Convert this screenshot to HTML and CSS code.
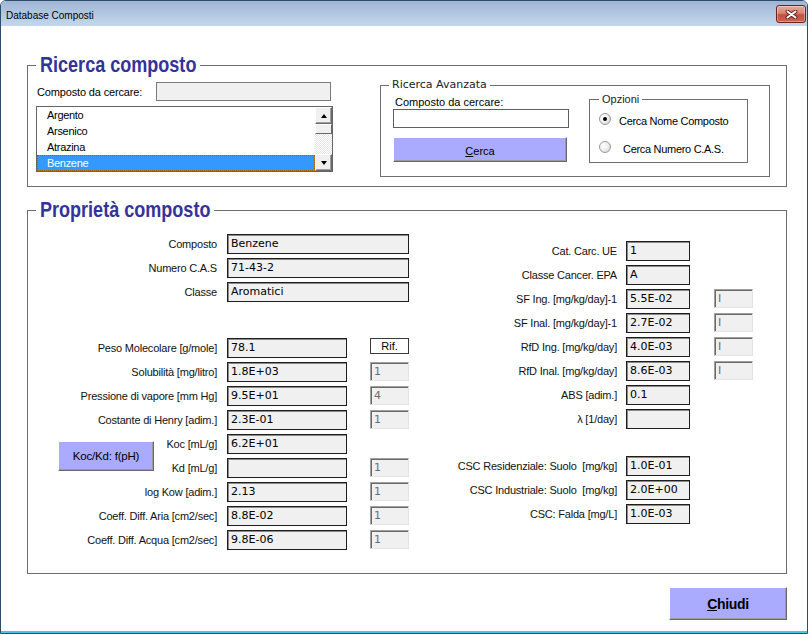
FILE: index.html
```html
<!DOCTYPE html>
<html lang="it">
<head>
<meta charset="utf-8">
<title>Database Composti</title>
<link rel="stylesheet" href="styles.css">
</head>
<body>
<div class="window">
  <div class="titlebar">
    <span class="title">Database Composti</span>
    <div class="close">
      <svg width="13" height="9" viewBox="0 0 13 9"><path d="M2.5 1.5 L10.5 7.5 M10.5 1.5 L2.5 7.5" stroke="#5a1a10" stroke-width="3.8" stroke-linecap="round" fill="none"/><path d="M2.5 1.5 L10.5 7.5 M10.5 1.5 L2.5 7.5" stroke="#fff" stroke-width="2.1" stroke-linecap="round" fill="none"/></svg>
    </div>
  </div>
  <div class="client">
    <fieldset class="group search">
      <legend class="lg-search"><span class="cond">Ricerca composto</span></legend>
      <div class="search-body">
        <div class="search-left">
          <div class="find-row">
            <span class="find-label">Composto da cercare:</span>
            <div class="find-input"></div>
          </div>
          <div class="listbox">
            <ul class="items">
              <li>Argento</li>
              <li>Arsenico</li>
              <li>Atrazina</li>
              <li class="sel">Benzene</li>
            </ul>
            <div class="scrollbar">
              <div class="sb-btn"><span class="tri-up"></span></div>
              <div class="sb-thumb"></div>
              <div class="sb-track"></div>
              <div class="sb-btn"><span class="tri-down"></span></div>
            </div>
          </div>
        </div>
        <fieldset class="advanced">
          <legend>Ricerca Avanzata</legend>
          <div class="adv-body">
            <div class="adv-left">
              <div class="adv-label">Composto da cercare:</div>
              <div class="adv-input"></div>
              <div class="btn cerca"><span><u>C</u>erca</span></div>
            </div>
            <fieldset class="options">
              <legend>Opzioni</legend>
              <div class="radio-row first"><span class="radio checked"></span><span class="rlabel">Cerca Nome Composto</span></div>
              <div class="radio-row second"><span class="radio"></span><span class="rlabel wide">Cerca Numero C.A.S.</span></div>
            </fieldset>
          </div>
        </fieldset>
      </div>
    </fieldset>

    <fieldset class="group props">
      <legend class="lg-props"><span class="cond">Proprietà composto</span></legend>
      <div class="props-body">
        <div class="left-grid">
          <div class="lbl">Composto</div><div class="val span">Benzene</div>
          <div class="lbl">Numero C.A.S</div><div class="val span">71-43-2</div>
          <div class="lbl">Classe</div><div class="val span">Aromatici</div>
          <div class="spacer"></div>
          <div class="lbl">Peso Molecolare [g/mole]</div><div class="val">78.1</div><div class="rif">Rif.</div>
          <div class="lbl">Solubilità [mg/litro]</div><div class="val">1.8E+03</div><div class="ref">1</div>
          <div class="lbl">Pressione di vapore [mm Hg]</div><div class="val">9.5E+01</div><div class="ref">4</div>
          <div class="lbl">Costante di Henry [adim.]</div><div class="val">2.3E-01</div><div class="ref">1</div>
          <div class="koc">
            <div class="btn koc-btn"><span>Koc/Kd: f(pH)</span></div>
            <div class="koc-labels"><div>Koc [mL/g]</div><div>Kd [mL/g]</div></div>
          </div>
          <div class="val">6.2E+01</div>
          <div class="val"></div><div class="ref">1</div>
          <div class="lbl">log Kow [adim.]</div><div class="val">2.13</div><div class="ref">1</div>
          <div class="lbl">Coeff. Diff. Aria [cm2/sec]</div><div class="val">8.8E-02</div><div class="ref">1</div>
          <div class="lbl">Coeff. Diff. Acqua [cm2/sec]</div><div class="val">9.8E-06</div><div class="ref">1</div>
        </div>
        <div class="right-grid">
          <div class="lbl">Cat. Carc. UE</div><div class="val">1</div>
          <div class="lbl">Classe Cancer. EPA</div><div class="val">A</div>
          <div class="lbl">SF Ing. [mg/kg/day]-1</div><div class="val">5.5E-02</div><div class="ref">I</div>
          <div class="lbl">SF Inal. [mg/kg/day]-1</div><div class="val">2.7E-02</div><div class="ref">I</div>
          <div class="lbl">RfD Ing. [mg/kg/day]</div><div class="val">4.0E-03</div><div class="ref">I</div>
          <div class="lbl">RfD Inal. [mg/kg/day]</div><div class="val">8.6E-03</div><div class="ref">I</div>
          <div class="lbl">ABS [adim.]</div><div class="val">0.1</div>
          <div class="lbl">λ [1/day]</div><div class="val"></div>
          <div class="spacer"></div>
          <div class="lbl">CSC Residenziale: Suolo&nbsp; [mg/kg]</div><div class="val">1.0E-01</div>
          <div class="lbl">CSC Industriale: Suolo&nbsp; [mg/kg]</div><div class="val">2.0E+00</div>
          <div class="lbl">CSC: Falda [mg/L]</div><div class="val">1.0E-03</div>
        </div>
      </div>
    </fieldset>

    <div class="footer">
      <div class="btn chiudi"><span><u>C</u>hiudi</span></div>
    </div>
  </div>
</div>
</body>
</html>
```

FILE: styles.css
```css
* { box-sizing: border-box; margin: 0; padding: 0; }
html, body { width: 811px; height: 634px; background: #fff; overflow: hidden; }
body { font-family: "Liberation Sans", Arial, sans-serif; font-size: 11px; color: #000; }

.window {
  width: 808px; height: 634px;
  border: 1px solid #2f4b6a;
  border-radius: 6px 6px 0 0;
  display: flex; flex-direction: column;
  background: #fff;
}
.titlebar {
  height: 25px; flex: none;
  background: linear-gradient(#9fb6d4, #c4d7ed);
  border-radius: 5px 5px 0 0;
  display: flex; align-items: center; justify-content: space-between;
  padding: 0 1px 0 5px;
}
.title { font-size: 10px; margin-top: 4px; color: #000; }
.close {
  width: 30px; height: 18px; margin-top: 1px;
  border: 1px solid #6a2219; border-radius: 3px;
  background: linear-gradient(#e6aa9c 0%, #d98472 45%, #c4503f 55%, #cb6350 100%);
  box-shadow: inset 0 0 0 1px rgba(255,255,255,.35);
  display: flex; align-items: center; justify-content: center;
}

.client {
  flex: 1;
  border-bottom: 2px solid #4cc3ea;
  padding-left: 26px;
  display: flex; flex-direction: column; align-items: flex-start;
}

fieldset { border: 1px solid #6e6e6e; min-width: 0; }
.group { width: 760px; }
.group > legend {
  font-family: "Liberation Sans", Arial, sans-serif;
  font-weight: bold; font-size: 22px; line-height: 22px;
  color: #333399; padding: 0 4px;
  white-space: nowrap; overflow: visible;
}
.cond { display: inline-block; transform: scaleX(0.82); transform-origin: 0 50%; }
.lg-search { width: 164px; }
.lg-props { width: 178px; }

/* Ricerca composto */
.search { margin-top: 28px; padding: 0 16px 9px 8px; }
.search-body { display: flex; align-items: flex-start; padding-top: 2px; }
.search-left { width: 297px; margin-top: 4px; }
.find-row { display: flex; align-items: center; height: 19px; }
.find-label { padding-left: 1px; letter-spacing: -0.15px; }
.find-input {
  margin-left: auto; margin-right: 2px; width: 175px; height: 19px;
  background: #f0f0f0; border: 1px solid #7a7a7a;
}
.listbox {
  margin-top: 5px; width: 297px; height: 66px;
  border: 1px solid #646464; display: flex; background: #fff;
}
.items { list-style: none; flex: 1; }
.items li { height: 16px; line-height: 16px; padding-left: 10px; letter-spacing: -0.3px; }
.items li.sel { background: #3399ff; color: #fff; outline: 1px dotted #a86000; outline-offset: -1px; }
.scrollbar { width: 17px; display: flex; flex-direction: column; }
.sb-btn {
  height: 17px; flex: none; background: #f0f0f0;
  border: 1px solid; border-color: #fff #696969 #696969 #fff;
  box-shadow: inset -1px -1px 0 #a0a0a0;
  display: flex; align-items: center; justify-content: center;
}
.sb-thumb {
  height: 10px; flex: none; background: #f0f0f0;
  border: 1px solid; border-color: #fff #696969 #696969 #fff;
}
.sb-track {
  flex: 1;
  background: repeating-conic-gradient(#ffffff 0 25%, #e4e4e4 0 50%) 0 0 / 2px 2px;
}
.tri-up { width: 0; height: 0; border-left: 3.5px solid transparent; border-right: 3.5px solid transparent; border-bottom: 4px solid #000; }
.tri-down { width: 0; height: 0; border-left: 3.5px solid transparent; border-right: 3.5px solid transparent; border-top: 4px solid #000; }

.advanced { margin-left: 47px; width: 390px; padding: 0 21px 13px 12px; }
.advanced > legend {
  font-family: "DejaVu Sans", Verdana, sans-serif; font-size: 11px; line-height: 14px;
  color: #222; padding: 0 3px; margin-left: -4px;
}
.adv-body { display: flex; align-items: flex-start; }
.adv-left { width: 176px; padding-top: 3px; }
.adv-label { height: 14px; line-height: 14px; padding-left: 2px; }
.adv-input { width: 176px; height: 19px; background: #fff; border: 1px solid #5f5f5f; }

.btn {
  background: #aaaaff;
  border: 1px solid; border-color: #fff #696969 #696969 #fff;
  box-shadow: inset -1px -1px 0 #9a9a9a;
  display: flex; align-items: center; justify-content: center;
  color: #000;
}
.cerca { margin-top: 9px; width: 174px; height: 25px; padding-top: 2px; }

.options { margin-left: 20px; width: 159px; padding: 5px 4px 7px 9px; }
.options > legend { font-size: 11px; line-height: 14px; color: #222; padding: 0 3px; }
.radio-row { display: flex; align-items: center; height: 16px; }
.radio-row.second { margin-top: 12px; }
.radio {
  width: 12px; height: 12px; border-radius: 50%; flex: none;
  border: 1px solid #9a9a9a;
  background: radial-gradient(circle at 35% 35%, #ffffff 0%, #f0f0f0 45%, #cfcfcf 100%);
  display: flex; align-items: center; justify-content: center;
}
.radio.checked::after { content: ""; width: 4px; height: 4px; border-radius: 50%; background: #000; }
.rlabel { margin-left: 8px; letter-spacing: -0.3px; margin-top: 3px; }
.rlabel.wide { margin-left: 12px; }

/* Proprietà */
.props { margin-top: 12px; padding: 13px 0 23px 8px; }
.props-body { display: flex; align-items: flex-start; }
.left-grid {
  margin-left: 4px;
  display: grid;
  grid-template-columns: 177px 120px 52px;
  grid-template-rows: repeat(3, 20px) 28px repeat(9, 20px);
  column-gap: 10px; row-gap: 4px;
}
.right-grid {
  margin-left: 21px; margin-top: 7px;
  display: grid;
  grid-template-columns: 187px 64px 54px;
  grid-template-rows: repeat(8, 20px) 19px repeat(3, 20px);
  column-gap: 9px; row-gap: 4px;
}
.lbl {
  grid-column: 1; text-align: right; white-space: nowrap;
  height: 20px; line-height: 20px; letter-spacing: -0.2px; color: #111;
}
.spacer { grid-column: 1 / -1; }
.val {
  grid-column: 2; height: 20px;
  background: #f0f0f0; border: 1px solid #1e1e1e;
  box-shadow: inset 1px 1px 0 #8a8a8a;
  font-family: "DejaVu Sans", Verdana, sans-serif; font-size: 11px;
  line-height: 18px; padding-left: 3px; white-space: nowrap; color: #000;
}
.val.span { grid-column: 2 / span 2; }
.rif {
  grid-column: 3; justify-self: end; align-self: start;
  width: 39px; height: 16px;
  border: 1px solid #3a3a3a; background: #fff;
  text-align: center; line-height: 14px;
}
.ref {
  grid-column: 3; justify-self: end; align-self: start;
  width: 39px; height: 19px;
  background: #f0f0f0;
  border: 1px solid; border-color: #a0a0a0 #e3e3e3 #e3e3e3 #a0a0a0;
  box-shadow: inset 1px 1px 0 #696969;
  font-family: "DejaVu Sans", Verdana, sans-serif; font-size: 11px;
  line-height: 17px; padding-left: 3px; color: #6d6d6d;
}
.koc {
  grid-column: 1; grid-row: span 2;
  display: flex; align-items: center; justify-content: space-between;
  padding-left: 18px;
}
.koc-btn { width: 96px; height: 30px; letter-spacing: -0.2px; padding-bottom: 1px; font-size: 11.5px; }
.koc-labels { display: flex; flex-direction: column; gap: 4px; text-align: right; letter-spacing: -0.2px; color: #111; }
.koc-labels div { height: 20px; line-height: 20px; }

.footer { width: 760px; display: flex; justify-content: flex-end; margin-top: 13px; }
.chiudi { width: 118px; height: 33px; font-weight: bold; font-size: 14px; letter-spacing: -0.3px; }
```
